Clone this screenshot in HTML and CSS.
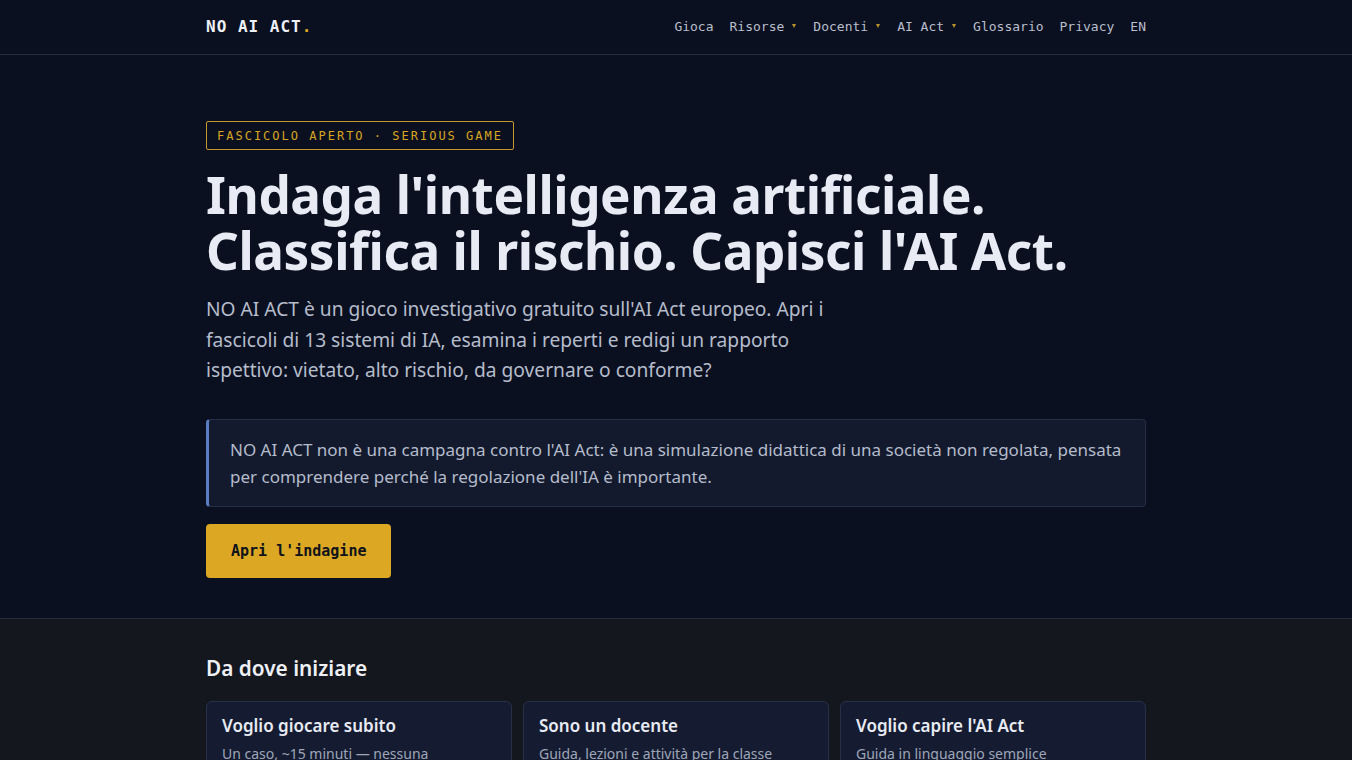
FILE: index.html
```html
<!DOCTYPE html>
<html lang="it">
<head>
    <meta charset="UTF-8">
    <meta name="viewport" content="width=device-width, initial-scale=1.0">
    <title>NO AI ACT</title>
    <link rel="stylesheet" href="styles.css">
</head>
<body>
    <header class="site-header">
        <div class="wrap header-inner">
            <a class="logo" href="#">NO AI ACT<span class="dot">.</span></a>
            <nav class="nav">
                <a href="#">Gioca</a>
                <a href="#">Risorse<span class="caret"></span></a>
                <a href="#">Docenti<span class="caret"></span></a>
                <a href="#">AI Act<span class="caret"></span></a>
                <a href="#">Glossario</a>
                <a href="#">Privacy</a>
                <a href="#">EN</a>
            </nav>
        </div>
    </header>

    <section class="hero">
        <div class="wrap">
            <span class="tag">FASCICOLO APERTO · SERIOUS GAME</span>
            <h1>Indaga l'intelligenza artificiale.<br>Classifica il rischio. Capisci l'AI Act.</h1>
            <p class="lead">NO AI ACT è un gioco investigativo gratuito sull'AI Act europeo. Apri i fascicoli di 13 sistemi di IA, esamina i reperti e redigi un rapporto ispettivo: vietato, alto rischio, da governare o conforme?</p>
            <div class="notice">
                NO AI ACT non è una campagna contro l'AI Act: è una simulazione didattica di una società non regolata, pensata per comprendere perché la regolazione dell'IA è importante.
            </div>
            <a class="btn" href="#">Apri l'indagine</a>
        </div>
    </section>

    <section class="start">
        <div class="wrap">
            <h2>Da dove iniziare</h2>
            <div class="cards">
                <a class="card" href="#">
                    <h3>Voglio giocare subito</h3>
                    <p>Un caso, ~15 minuti — nessuna registrazione</p>
                </a>
                <a class="card" href="#">
                    <h3>Sono un docente</h3>
                    <p>Guida, lezioni e attività per la classe</p>
                </a>
                <a class="card" href="#">
                    <h3>Voglio capire l'AI Act</h3>
                    <p>Guida in linguaggio semplice</p>
                </a>
            </div>
        </div>
    </section>
</body>
</html>
```

FILE: styles.css
```css
body {
    margin: 0;
    background-color: #0b1020;
    color: #e8ebf3;
    font-family: "Noto Sans", sans-serif;
}
a {
    color: inherit;
    text-decoration: none;
}
.wrap {
    width: 940px;
    margin: 0 auto;
}

/* header */
.site-header {
    border-bottom: 1px solid #262c3d;
}
.header-inner {
    display: flex;
    justify-content: space-between;
    align-items: center;
    height: 52px;
    padding-bottom: 2px;
}
.logo {
    font-family: "DejaVu Sans Mono", monospace;
    font-weight: bold;
    font-size: 16px;
    letter-spacing: 1px;
    color: #eef0f6;
}
.logo .dot {
    color: #d9a521;
}
.nav {
    display: flex;
    gap: 16px;
    font-family: "DejaVu Sans Mono", monospace;
    font-size: 13px;
    color: #b9bfcc;
}
/* small dropdown triangle */
.caret {
    display: inline-block;
    width: 0;
    height: 0;
    margin: 0 1px 2px 8px;
    border-left: 2px solid transparent;
    border-right: 2px solid transparent;
    border-top: 4px solid #b8932e;
    vertical-align: middle;
}

/* hero */
.hero {
    padding: 66px 0 40px;
    border-bottom: 1px solid #262c3d;
}
.tag {
    display: inline-block;
    padding: 7px 10px 6px;
    border: 1px solid #c9982a;
    border-radius: 2px;
    color: #d9a521;
    font-family: "DejaVu Sans Mono", monospace;
    font-size: 12px;
    letter-spacing: 2px;
}
h1 {
    margin: 16px 0 0;
    font-size: 51.2px;
    line-height: 56px;
    font-weight: bold;
    color: #e8ebf3;
    letter-spacing: -0.4px;
}
.lead {
    width: 640px;
    margin: 16px 0 0;
    font-size: 19.2px;
    line-height: 1.6;
    color: #b5bccb;
}
.notice {
    margin-top: 33px;
    padding: 16px 22px 16px 21px;
    background-color: #131a2d;
    border: 1px solid #262e45;
    border-left: 3px solid #5a7dc2;
    border-radius: 4px;
    font-size: 17px;
    line-height: 27px;
    color: #b5bccb;
}
.btn {
    display: inline-block;
    margin-top: 17px;
    padding: 16px 25px;
    background-color: #dca824;
    border-radius: 4px;
    color: #11131b;
    font-family: "DejaVu Sans Mono", monospace;
    font-weight: bold;
    font-size: 15px;
    line-height: 22px;
}

/* start section */
.start {
    background-color: #15171e;
    padding: 36px 0 40px;
}
h2 {
    margin: 0 0 20px;
    font-size: 20.8px;
    line-height: 26px;
    font-weight: 600;
    color: #eef0f6;
}
.cards {
    display: grid;
    grid-template-columns: repeat(3, 1fr);
    gap: 11px;
}
.card {
    background-color: #151c32;
    border: 1px solid #283049;
    border-radius: 6px;
    padding: 12px 15px 16px;
}
.card h3 {
    margin: 0;
    font-size: 17px;
    line-height: 24px;
    font-weight: 600;
    color: #e8ebf3;
}
.card p {
    margin: 6px 0 0;
    font-size: 14px;
    line-height: 20px;
    color: #9ea6b8;
}
```
